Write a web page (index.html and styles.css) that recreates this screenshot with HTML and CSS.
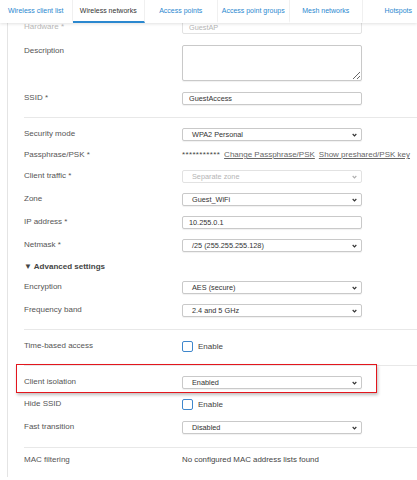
FILE: index.html
```html
<!DOCTYPE html>
<html lang="en">
<head>
    <meta charset="UTF-8">
    <meta name="viewport" content="width=device-width, initial-scale=1.0">
    <title>Wireless networks</title>
    <link rel="stylesheet" href="styles.css">
</head>
<body>
    <nav class="tabs">
        <a class="tab">Wireless client list</a>
        <a class="tab active">Wireless networks</a>
        <a class="tab">Access points</a>
        <a class="tab">Access point groups</a>
        <a class="tab">Mesh networks</a>
        <a class="tab">Hotspots</a>
    </nav>

    <div class="panel">
        <div class="section first">
            <div class="row">
                <label class="faded">Hardware *</label>
                <div class="field disabled">GuestAP</div>
            </div>
            <div class="row">
                <label for="description">Description</label>
                <textarea id="description" class="textarea"></textarea>
            </div>
            <div class="row">
                <label for="ssid">SSID *</label>
                <input type="text" id="ssid" class="field" value="GuestAccess">
            </div>
        </div>

        <div class="section">
            <div class="row">
                <label>Security mode</label>
                <div class="select">WPA2 Personal<svg class="chevron" viewBox="0 0 6 4"><polyline points="0.8,0.8 3,3 5.2,0.8"/></svg></div>
            </div>
            <div class="row psk-row">
                <label>Passphrase/PSK *</label>
                <div class="psk"><span class="stars">***********</span><a href="#">Change Passphrase/PSK</a><a href="#">Show preshared/PSK key</a></div>
            </div>
            <div class="row">
                <label>Client traffic *</label>
                <div class="select disabled">Separate zone<svg class="chevron" viewBox="0 0 6 4"><polyline points="0.8,0.8 3,3 5.2,0.8"/></svg></div>
            </div>
            <div class="row">
                <label>Zone</label>
                <div class="select">Guest_WiFi<svg class="chevron" viewBox="0 0 6 4"><polyline points="0.8,0.8 3,3 5.2,0.8"/></svg></div>
            </div>
            <div class="row">
                <label for="ip">IP address *</label>
                <input type="text" id="ip" class="field" value="10.255.0.1">
            </div>
            <div class="row">
                <label>Netmask *</label>
                <div class="select">/25 (255.255.255.128)<svg class="chevron" viewBox="0 0 6 4"><polyline points="0.8,0.8 3,3 5.2,0.8"/></svg></div>
            </div>
            <div class="advanced">&#9660; Advanced settings</div>
            <div class="row">
                <label>Encryption</label>
                <div class="select">AES (secure)<svg class="chevron" viewBox="0 0 6 4"><polyline points="0.8,0.8 3,3 5.2,0.8"/></svg></div>
            </div>
            <div class="row">
                <label>Frequency band</label>
                <div class="select">2.4 and 5 GHz<svg class="chevron" viewBox="0 0 6 4"><polyline points="0.8,0.8 3,3 5.2,0.8"/></svg></div>
            </div>
        </div>

        <div class="section single">
            <div class="row">
                <label>Time-based access</label>
                <div class="check"><span class="box"></span>Enable</div>
            </div>
        </div>

        <div class="section isolation">
            <div class="row highlight">
                <label>Client isolation</label>
                <div class="select">Enabled<svg class="chevron" viewBox="0 0 6 4"><polyline points="0.8,0.8 3,3 5.2,0.8"/></svg></div>
            </div>
            <div class="row hide-row">
                <label>Hide SSID</label>
                <div class="check"><span class="box"></span>Enable</div>
            </div>
            <div class="row">
                <label>Fast transition</label>
                <div class="select">Disabled<svg class="chevron" viewBox="0 0 6 4"><polyline points="0.8,0.8 3,3 5.2,0.8"/></svg></div>
            </div>
        </div>

        <div class="section last">
            <div class="row">
                <label>MAC filtering</label>
                <div class="plain">No configured MAC address lists found</div>
            </div>
        </div>
    </div>
</body>
</html>
```

FILE: styles.css
```css
body {
    font-family: "Liberation Sans", Arial, sans-serif;
    background-color: #fff;
    color: #555;
    margin: 0;
    padding: 0;
    overflow: hidden;
}

.tabs {
    position: relative;
    z-index: 2;
    display: flex;
    height: 23px;
    background-color: #fff;
    box-shadow: 0 1px 3px rgba(0, 0, 0, 0.12);
    white-space: nowrap;
}

.tab {
    flex: 0 0 72.5px;
    box-sizing: border-box;
    border-right: 1px solid #f0f0f0;
    text-align: center;
    font-size: 7px;
    line-height: 21px;
    color: #2b88cf;
    border-bottom: 2px solid transparent;
}

.tab.active {
    color: #333;
    border-bottom-color: #2b88cf;
}

.panel {
    margin-top: -2px;
    margin-left: 7px;
    border-left: 1px solid #e4e4e4;
    padding-left: 16px;
    font-size: 8px;
}

.section {
    display: flex;
    flex-direction: column;
    gap: 10px;
    padding: 10px 0 12px;
    border-bottom: 1px solid #e8e8e8;
}

.section.first {
    gap: 11px;
    padding-top: 0;
}

.section.single {
    padding-top: 9.5px;
}

.section.isolation {
    padding-top: 10.5px;
    padding-bottom: 13px;
}

.section.last {
    padding-top: 6.5px;
    border-bottom: none;
}

.row {
    position: relative;
    display: grid;
    grid-template-columns: 158px 180px;
    align-items: start;
    width: 338px;
}

.row label {
    line-height: 11px;
    color: #555;
}

.row label.faded {
    color: #b8b8b8;
}

.psk-row {
    margin-top: -2px;
}

.hide-row {
    margin-top: -1.5px;
}

.field,
.select,
.textarea {
    box-sizing: border-box;
    height: 13px;
    width: 180px;
    border: 1px solid #c9c9c9;
    border-radius: 2px;
    box-shadow: 0 1px 1px rgba(0, 0, 0, 0.06);
    background-color: #fff;
    font-family: inherit;
    font-size: 7.3px;
    line-height: 11px;
    color: #333;
    margin: 0;
    padding: 0 6px;
}

.field.disabled,
.select.disabled {
    border-color: #e2e2e2;
    color: #b5b5b5;
    box-shadow: none;
}

.textarea {
    height: 36px;
    resize: both;
    display: block;
}

.select {
    position: relative;
    padding-left: 9px;
}

.chevron {
    position: absolute;
    right: 4px;
    top: 4px;
    width: 5px;
    height: 4px;
    fill: none;
    stroke: #333;
    stroke-width: 1.4;
}

.select.disabled .chevron {
    stroke: #b0b0b0;
}

.psk {
    font-size: 8px;
    line-height: 11px;
    color: #444;
    white-space: nowrap;
}

.stars {
    letter-spacing: 0.35px;
}

.psk a {
    color: #666;
    text-decoration: underline;
    margin-left: 4px;
}

.advanced {
    height: 9px;
    line-height: 9px;
    font-size: 8px;
    font-weight: bold;
    color: #444;
}

.check {
    display: flex;
    align-items: center;
    height: 13px;
    font-size: 8px;
    color: #444;
}

.box {
    box-sizing: border-box;
    width: 11px;
    height: 11px;
    border: 1px solid #3f87cc;
    border-radius: 2px;
    margin-right: 5px;
}

.plain {
    font-size: 7.9px;
    line-height: 11px;
    color: #444;
    white-space: nowrap;
}

.highlight::after {
    content: "";
    position: absolute;
    left: -8px;
    top: -12px;
    width: 361px;
    height: 29px;
    box-sizing: border-box;
    border: 1.5px solid #e3161d;
    box-shadow: 1px 2px 3px rgba(0, 0, 0, 0.25);
    pointer-events: none;
}
```
